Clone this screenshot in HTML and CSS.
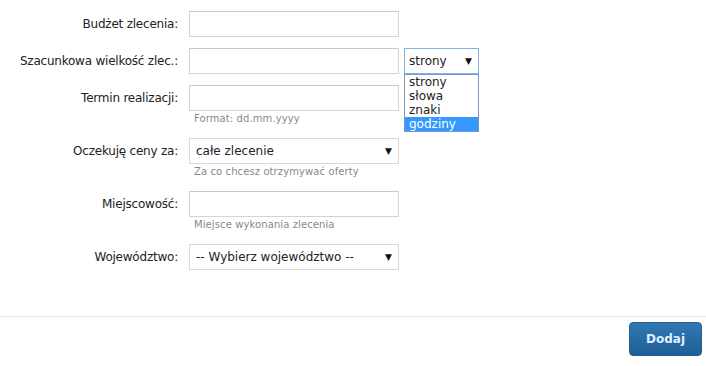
FILE: index.html
```html
<!DOCTYPE html>
<html lang="pl">
  <head>
    <meta charset="UTF-8" />
    <meta name="viewport" content="width=device-width, initial-scale=1.0" />
    <title>Dodaj zlecenie</title>
    <link rel="stylesheet" href="styles.css">
  </head>
  <body>
    <form class="order-form">
      <div class="fields">
        <div class="row">
          <label class="label">Budżet zlecenia:</label>
          <div class="field"><input class="input" type="text"></div>
        </div>

        <div class="row">
          <label class="label">Szacunkowa wielkość zlec.:</label>
          <div class="field field-inline">
            <input class="input" type="text">
            <div class="unit">
              <div class="fake-select unit-select">strony<span class="arrow">&#9660;</span></div>
              <ul class="unit-list">
                <li>strony</li>
                <li>słowa</li>
                <li>znaki</li>
                <li class="active">godziny</li>
              </ul>
            </div>
          </div>
        </div>

        <div class="row">
          <label class="label">Termin realizacji:</label>
          <div class="field">
            <input class="input" type="text">
            <div class="hint">Format: dd.mm.yyyy</div>
          </div>
        </div>

        <div class="row">
          <label class="label">Oczekuję ceny za:</label>
          <div class="field">
            <div class="fake-select">całe zlecenie<span class="arrow">&#9660;</span></div>
            <div class="hint">Za co chcesz otrzymywać oferty</div>
          </div>
        </div>

        <div class="row">
          <label class="label">Miejscowość:</label>
          <div class="field">
            <input class="input" type="text">
            <div class="hint">Miejsce wykonania zlecenia</div>
          </div>
        </div>

        <div class="row">
          <label class="label">Województwo:</label>
          <div class="field">
            <div class="fake-select">-- Wybierz województwo --<span class="arrow">&#9660;</span></div>
          </div>
        </div>
      </div>

      <div class="footer">
        <button class="btn-submit" type="button">Dodaj</button>
      </div>
    </form>
  </body>
</html>
```

FILE: styles.css
```css
* {
  box-sizing: border-box;
}
body {
  margin: 0;
  background-color: #ffffff;
  color: #222222;
  font-family: "DejaVu Sans", Verdana, sans-serif;
  font-size: 12px;
}
.fields {
  padding-top: 11px;
  height: 316px;
}
.row {
  display: grid;
  grid-template-columns: 178px 210px;
  column-gap: 11px;
  margin-bottom: 11px;
}
.label {
  text-align: right;
  line-height: 26px;
  white-space: nowrap;
  letter-spacing: -0.22px;
}
.field-inline {
  display: flex;
  gap: 5px;
}
.input {
  display: block;
  flex-shrink: 0;
  width: 210px;
  height: 26px;
  margin: 0;
  border: 1px solid #d4d4d4;
  border-top-color: #c8c8c8;
  background: #ffffff;
}
.fake-select {
  position: relative;
  width: 210px;
  height: 26px;
  padding-left: 6px;
  border: 1px solid #d9d9d9;
  line-height: 24px;
  color: #222222;
  background: #ffffff;
}
.arrow {
  position: absolute;
  right: 6px;
  top: 0;
  font-size: 9px;
  color: #111111;
}
.hint {
  font-size: 10px;
  color: #888888;
  line-height: 16px;
  padding-left: 5px;
  letter-spacing: 0.1px;
}
.unit {
  position: relative;
  flex-shrink: 0;
}
.unit-select {
  width: 75px;
  border-color: #7eb4ea;
  padding-left: 4px;
}
.unit-list {
  position: absolute;
  left: 0;
  top: 26px;
  width: 75px;
  margin: 0;
  padding: 0;
  list-style: none;
  border: 1px solid #7a96c2;
  background: #ffffff;
}
.unit-list li {
  height: 14px;
  line-height: 14px;
  padding-left: 4px;
  font-size: 12px;
}
.unit-list .active {
  background-color: #3399ff;
  color: #ffffff;
}
.footer {
  border-top: 1px solid #e3e3e3;
  display: flex;
  justify-content: flex-end;
  padding: 5px 4px 0 0;
}
.btn-submit {
  width: 73px;
  height: 34px;
  border: 1px solid #245f91;
  border-radius: 4px;
  background: linear-gradient(#3079b4, #1f5f95);
  color: #dff0ff;
  font-family: "DejaVu Sans", Verdana, sans-serif;
  font-size: 12px;
  font-weight: bold;
}
```
